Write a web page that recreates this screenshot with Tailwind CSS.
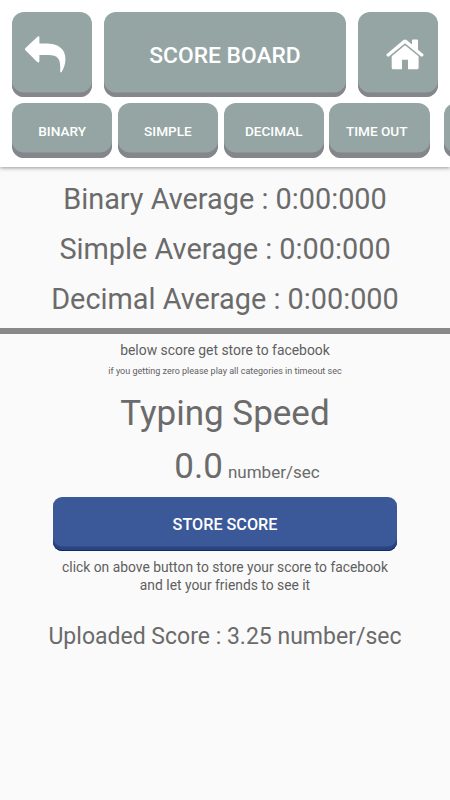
<!DOCTYPE html>
<html lang="en">
<head>
<meta charset="utf-8">
<title>Score Board</title>
<script src="https://cdn.jsdelivr.net/npm/@tailwindcss/browser@4"></script>
</head>
<body class="bg-[#fafafa] font-[Roboto,sans-serif] text-[#6b6b6b] w-[450px] h-[800px] overflow-hidden">
<header class="bg-white h-[166.5px] pt-[11.7px] overflow-hidden shadow-[0_1px_4px_rgba(0,0,0,0.4)]">
  <div class="flex gap-3 px-3">
    <button class="w-20 h-[85.8px] rounded-xl bg-[#95a5a4] shadow-[inset_0_-4.5px_0_#84868c] pl-[13px]" aria-label="Back">
      <svg class="w-[41px] h-[37px]" viewBox="0 0 41 37" fill="#fff"><path d="M.4 14.2Q-.5 13 .5 12L12.2.9Q14.4-.5 14.4 1.6V7.5H21C34 7.5 40.5 13.5 40.4 23C40.4 28 38.8 32.5 36.8 35.8Q35.3 37.6 35.2 35.3C35.6 24 34.5 19 23 19H14.4V25.2Q14 27.3 12.2 26Z"/></svg>
    </button>
    <h1 class="w-[242px] h-[85.8px] rounded-xl bg-[#95a5a4] shadow-[inset_0_-4.5px_0_#84868c] flex items-center justify-center text-white font-medium text-[22.8px] pt-[3px]">SCORE BOARD</h1>
    <button class="w-20 h-[85.8px] rounded-xl bg-[#95a5a4] shadow-[inset_0_-4.5px_0_#84868c] pl-[28px]" aria-label="Home">
      <svg class="w-[38px] h-[31px]" viewBox="0 0 38 31" fill="#fff"><path d="M.6 15.2L17.4 1Q19 0 20.6 1L26 5.6V1.5Q26 .5 27 .5H31Q32 .5 32 1.5V10.7L37.4 15.2Q38 16 37.2 16.8L36.3 17.6Q35.5 18 34.8 17.3L19 4.2L3.2 17.3Q2.5 18 1.7 17.5L.7 16.8Q0 16 .6 15.2Z"/><path d="M5.7 17.2L19 6.2L32.6 17.2V28.7Q32.6 30.3 31 30.3H22V20.8H16V30.3H7.3Q5.7 30.3 5.7 28.7Z"/></svg>
    </button>
  </div>
  <nav class="flex gap-[5.5px] pl-3 mt-[5.7px] text-white font-medium text-[13.6px]">
    <button class="w-[100.3px] shrink-0 h-[54.5px] rounded-xl bg-[#95a5a4] shadow-[inset_0_-5.5px_0_#84868c] pt-[2px]">BINARY</button>
    <button class="w-[100.3px] shrink-0 h-[54.5px] rounded-xl bg-[#95a5a4] shadow-[inset_0_-5.5px_0_#84868c] pt-[2px]">SIMPLE</button>
    <button class="w-[100.3px] shrink-0 h-[54.5px] rounded-xl bg-[#95a5a4] shadow-[inset_0_-5.5px_0_#84868c] pt-[2px]">DECIMAL</button>
    <button class="w-[100.7px] shrink-0 h-[54.5px] rounded-xl bg-[#95a5a4] shadow-[inset_0_-5.5px_0_#84868c] pt-[2px] pr-[6px]">TIME OUT</button>
    <button class="w-[100px] shrink-0 h-[54.5px] rounded-xl bg-[#95a5a4] shadow-[inset_0_-5.5px_0_#84868c] ml-[8.5px]" aria-label="More"></button>
  </nav>
</header>
<section class="h-[167.5px] pt-[7.5px] border-b-[6px] border-[#888] text-center text-[28.85px] leading-[50px] whitespace-nowrap">
  <p>Binary Average : 0:00:000</p>
  <p>Simple Average : 0:00:000</p>
  <p>Decimal Average : 0:00:000</p>
</section>
<main class="flex flex-col items-center text-center whitespace-nowrap">
  <p class="mt-[6px] text-[13.9px] leading-5 text-[#5f5f5f]">below score get store to facebook</p>
  <p class="mt-[5px] text-[9px] leading-3 text-[#5f5f5f]">if you getting zero please play all categories in timeout sec</p>
  <h2 class="mt-4 text-[35px] leading-[42px]">Typing Speed</h2>
  <p class="h-[42px] mt-[11px] ml-[44px] leading-[42px]"><span class="text-[35px]">0.0</span><span class="text-[17px] ml-[5px]">number/sec</span></p>
  <button class="mt-[8.5px] w-[344px] h-[54.5px] shrink-0 rounded-[9px] bg-[#3b5998] shadow-[inset_0_-1px_0_0_#0a2a70,inset_0_-4.5px_0_#2b4480] text-white font-medium text-[16.2px] pt-[2px]">STORE SCORE</button>
  <p class="mt-[6.5px] text-[13.85px] leading-[18.5px] text-[#5f5f5f]">click on above button to store your score to facebook<br>and let your friends to see it</p>
  <p class="mt-[27.5px] text-[23px] leading-[30px]">Uploaded Score : 3.25 number/sec</p>
</main>
</body>
</html>
